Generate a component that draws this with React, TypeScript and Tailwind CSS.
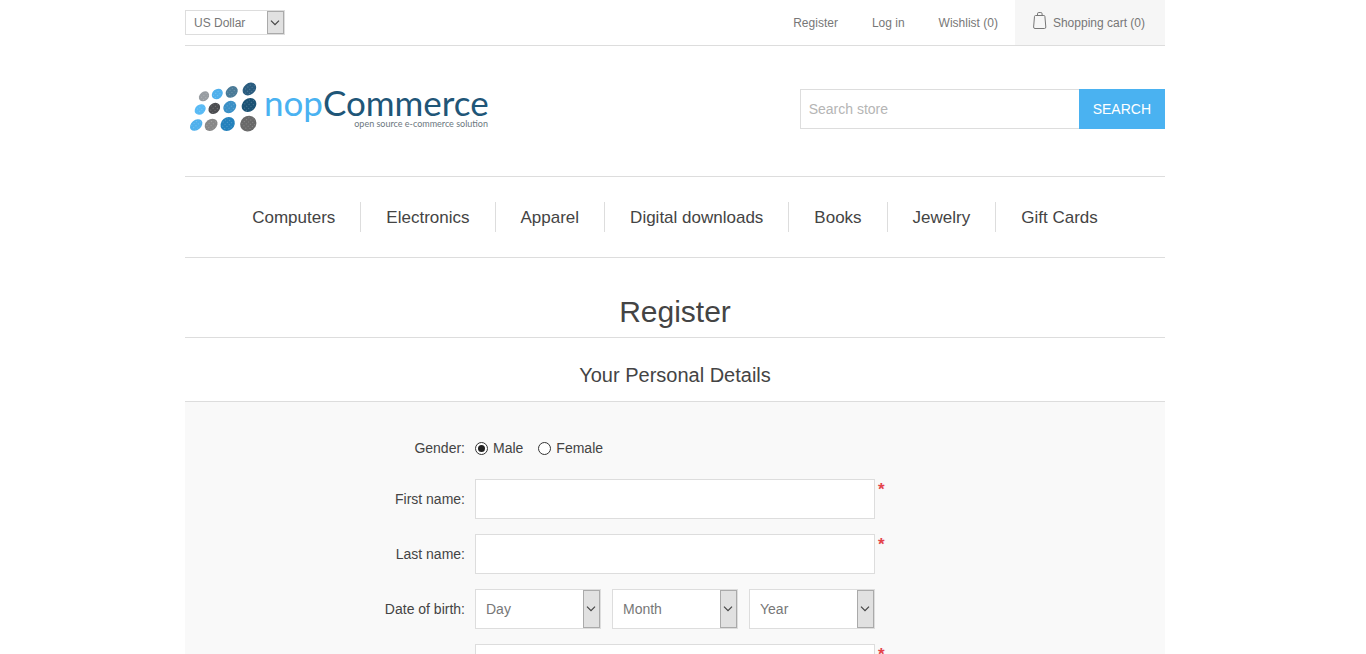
import React from "react";

const navItems = ["Computers", "Electronics", "Apparel", "Digital downloads", "Books", "Jewelry", "Gift Cards"];

const logoDots = [
  { x: 19, y: 17.3, rx: 5.6, ry: 4.4, fill: "#989da2" },
  { x: 32.3, y: 15, rx: 6, ry: 4.8, fill: "#4fb0ec" },
  { x: 46.7, y: 12.9, rx: 6.6, ry: 5.2, fill: "#4a7a97" },
  { x: 64.4, y: 10, rx: 7.4, ry: 5.7, fill: "#2a5c7f" },
  { x: 15.2, y: 30.5, rx: 6, ry: 4.8, fill: "#58baf5" },
  { x: 29.3, y: 29.4, rx: 6.3, ry: 5.1, fill: "#4c4d50" },
  { x: 44.7, y: 28, rx: 6.9, ry: 5.7, fill: "#3b90c6" },
  { x: 64, y: 26, rx: 7.9, ry: 6.4, fill: "#1b5274" },
  { x: 11.2, y: 46, rx: 6.9, ry: 5, fill: "#4fb0ec" },
  { x: 26.1, y: 45.8, rx: 7, ry: 5.5, fill: "#888888" },
  { x: 42.7, y: 45, rx: 7.6, ry: 6.5, fill: "#2381bc" },
  { x: 63.3, y: 44.6, rx: 8.4, ry: 7.6, fill: "#696969" },
];

function Logo() {
  return (
    <svg width="310" height="60" viewBox="0 0 310 60" role="img" aria-label="nopCommerce" className="block">
      <defs>
        <pattern id="grain" width="3" height="3" patternUnits="userSpaceOnUse">
          <circle cx="1.5" cy="1.5" r="0.5" fill="#ffffff" fillOpacity="0.3" />
        </pattern>
      </defs>
      {logoDots.map((d) => (
        <g key={`${d.x}-${d.y}`} transform={`rotate(-40 ${d.x} ${d.y})`}>
          <ellipse cx={d.x} cy={d.y} rx={d.rx} ry={d.ry} fill={d.fill} />
          <ellipse cx={d.x} cy={d.y} rx={d.rx - 1} ry={d.ry - 1} fill="url(#grain)" />
        </g>
      ))}
      <text x="79" y="37" fontSize="35" fontFamily="Lato, sans-serif" fill="#4ab2f1">
        nop<tspan fill="#1f5678">Commerce</tspan>
      </text>
      <text x="303" y="48" fontSize="9" textAnchor="end" fontFamily="Lato, sans-serif" fill="#6b7780">
        open source e-commerce solution
      </text>
    </svg>
  );
}

function Chevron() {
  return (
    <span className="pointer-events-none absolute inset-y-px right-px flex w-[17px] items-center justify-center border border-[#aaa] bg-[#e1e1e1]">
      <svg width="11" height="6" viewBox="0 0 11 6" fill="none" stroke="#444" strokeWidth="1.2">
        <path d="M1 0.7 5 4.7 9 0.7" />
      </svg>
    </span>
  );
}

function DateSelect({ label }: { label: string }) {
  return (
    <div className="relative flex-1">
      <select aria-label={label} className="h-10 w-full appearance-none border border-[#ddd] bg-white pl-[10px] text-sm text-[#777] outline-none">
        <option>{label}</option>
      </select>
      <Chevron />
    </div>
  );
}

function Row({ label, htmlFor, children }: { label: string; htmlFor?: string; children: React.ReactNode }) {
  return (
    <div className="flex items-center gap-[10px]">
      <label htmlFor={htmlFor} className="w-2/7 text-right">
        {label}
      </label>
      {children}
    </div>
  );
}

function TextRow({ label, id, type = "text" }: { label: string; id: string; type?: string }) {
  return (
    <Row label={label} htmlFor={id}>
      <div className="flex gap-[3px]">
        <input id={id} type={type} required className="h-10 w-[400px] border border-[#ddd] bg-white px-2 text-[#777] shadow-none outline-none" />
        <span className="text-[17px] leading-[22px] font-bold text-[#e4434b]">*</span>
      </div>
    </Row>
  );
}

function Radio({ label, defaultChecked }: { label: string; defaultChecked?: boolean }) {
  return (
    <label className="flex items-center gap-[5px]">
      <input
        type="radio"
        name="gender"
        defaultChecked={defaultChecked}
        className="grid size-[13px] appearance-none place-items-center rounded-full border border-[#333] bg-white before:size-[7px] before:rounded-full checked:before:bg-[#222]"
      />
      {label}
    </label>
  );
}

export default function App() {
  return (
    <div className="h-screen overflow-y-auto bg-white pr-4 font-['Liberation_Sans',Arial,sans-serif] text-sm text-[#444] [scrollbar-width:none]">
      <div className="mx-auto max-w-[980px]">
        <header>
          <div className="flex h-[46px] items-stretch justify-between border-b border-[#ddd] text-xs text-[#777]">
            <div className="relative w-[100px] self-center">
              <select aria-label="Currency" className="block h-[25px] w-full appearance-none border border-[#ddd] bg-white pl-2 text-xs text-[#777] outline-none">
                <option>US Dollar</option>
              </select>
              <Chevron />
            </div>
            <nav aria-label="Account" className="flex items-center">
              <a href="#register" className="px-[17px]">Register</a>
              <a href="#login" className="px-[17px]">Log in</a>
              <a href="#wishlist" className="px-[17px]">Wishlist (0)</a>
              <a href="#cart" className="flex h-full items-center gap-[6px] bg-[#f6f6f6] pr-5 pl-[18px]">
                <svg width="14" height="17" viewBox="0 0 14 17" fill="none" stroke="#777" className="-mt-1">
                  <path d="M2.600 3.500h8.300q.9 0 1 .9l.9 10.600q.1 1.500-1.400 1.500H2q-1.500 0-1.400-1.500l.9-10.600q.1-.9 1.100-.9z" />
                  <path d="M4.500 3.500V1.800q0-1.300 1.300-1.300h2q1.300 0 1.300 1.300v1.700" />
                </svg>
                Shopping cart (0)
              </a>
            </nav>
          </div>
          <div className="flex items-center justify-between pt-[33px] pb-[37px]">
            <a href="#home">
              <Logo />
            </a>
            <form className="flex" onSubmit={(e) => e.preventDefault()}>
              <input
                type="text"
                aria-label="Search store"
                placeholder="Search store"
                className="h-10 w-[279px] border border-r-0 border-[#ddd] px-2 text-sm outline-none placeholder:text-[#b5b5b5]"
              />
              <button type="submit" className="h-10 bg-[#4ab2f1] px-[14px] text-sm text-white">
                SEARCH
              </button>
            </form>
          </div>
        </header>
        <nav aria-label="Categories" className="border-y border-[#ddd] py-[25px]">
          <ul className="flex justify-center">
            {navItems.map((item) => (
              <li key={item} className="h-[30px] border-l border-[#ddd] px-[25px] text-[17px] leading-8 text-[#444] first:border-l-0">
                <a href="#category">{item}</a>
              </li>
            ))}
          </ul>
        </nav>
        <main>
          <h1 className="border-b border-[#ddd] pt-9 pb-[7px] text-center text-3xl leading-9">Register</h1>
          <form>
            <h2 className="pt-[23px] pb-3 text-center text-xl leading-7">Your Personal Details</h2>
            <div className="flex flex-col gap-[15px] border-t border-[#ddd] bg-[#f9f9f9] pt-[30px] pb-10">
              <Row label="Gender:">
                <div className="flex h-8 items-center gap-[15px]">
                  <Radio label="Male" defaultChecked />
                  <Radio label="Female" />
                </div>
              </Row>
              <TextRow label="First name:" id="first-name" />
              <TextRow label="Last name:" id="last-name" />
              <Row label="Date of birth:">
                <div className="flex w-[400px] gap-[11px]">
                  <DateSelect label="Day" />
                  <DateSelect label="Month" />
                  <DateSelect label="Year" />
                </div>
              </Row>
              <TextRow label="Email:" id="email" type="email" />
            </div>
          </form>
        </main>
      </div>
    </div>
  );
}
